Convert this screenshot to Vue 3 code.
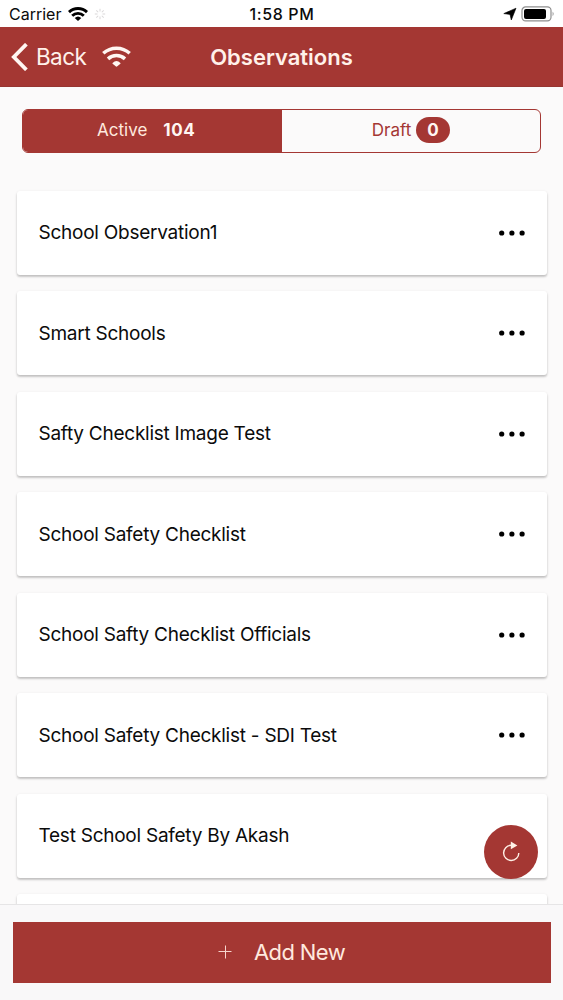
<script setup>
import { ref } from 'vue';

const activeTab = ref('active');

const observations = [
    'School Observation1',
    'Smart Schools',
    'Safty Checklist Image Test',
    'School Safety Checklist',
    'School Safty Checklist Officials',
    'School Safety Checklist - SDI Test',
    'Test School Safety By Akash',
    '',
];

const spinnerAngles = [0, 45, 90, 135, 180, 225, 270, 315];
</script>

<template>
    <div class="screen">
        <div class="status-bar">
            <div class="status-left">
                <span class="carrier">Carrier</span>
                <svg class="status-wifi" viewBox="0 0 20 14" width="20" height="14">
                    <g fill="none" stroke="#000" stroke-width="2.9">
                        <path d="M1 5.1a13 13 0 0 1 18 0" />
                        <path d="M4.2 8.7a8.4 8.4 0 0 1 11.6 0" />
                    </g>
                    <path d="M6.7 11a4.8 4.8 0 0 1 6.6 0L10 14z" />
                </svg>
                <svg class="spinner" viewBox="0 0 12 12" width="12" height="12">
                    <path
                        v-for="angle in spinnerAngles"
                        :key="angle"
                        d="M6 .8v2.7"
                        stroke="#d9d7d8"
                        stroke-width="1"
                        :transform="`rotate(${angle} 6 6)`"
                    />
                </svg>
            </div>
            <span class="clock">1:58 PM</span>
            <div class="status-right">
                <svg viewBox="0 0 14 14" width="14" height="14">
                    <path d="M13 1.2 8.3 13 7 7.4.8 6.6z" stroke="#000" stroke-width=".6" />
                </svg>
                <svg viewBox="0 0 34 16" width="34" height="16">
                    <rect x="1" y=".9" width="29" height="14" rx="3.6" fill="#fff" stroke="#8e8e8e" stroke-width="1.2" />
                    <rect x="3" y="2.9" width="22" height="10" rx="2" />
                    <path d="M31.6 5.6q2 2.3 0 4.6z" fill="#8e8e8e" />
                </svg>
            </div>
        </div>

        <header class="toolbar">
            <button class="back-button">
                <svg viewBox="0 0 17 28" width="17" height="28">
                    <path d="M15.4 1.2 2.8 14l12.6 12.8" fill="none" stroke="#fff6f2" stroke-width="3.8" />
                </svg>
                <span>Back</span>
            </button>
            <svg viewBox="0 0 29 21" width="29" height="21">
                <g fill="none" stroke="#fff6f2" stroke-width="3.5">
                    <path d="M1.3 7.3a19.6 19.6 0 0 1 26.4 0" />
                    <path d="M6 12.9a12.6 12.6 0 0 1 17 0" />
                </g>
                <path d="M10.6 16.9q3.9-3.8 7.8 0 .4.5 0 .9l-3.4 2.7q-.5.3-1 0l-3.4-2.7q-.4-.4 0-.9z" fill="#fff6f2" />
            </svg>
            <h1 class="title">Observations</h1>
        </header>

        <main class="content">
            <div class="segment">
                <button
                    class="segment-button"
                    :class="{ selected: activeTab === 'active' }"
                    @click="activeTab = 'active'"
                >
                    <span>Active</span>
                    <span class="count count-active">104</span>
                </button>
                <button
                    class="segment-button"
                    :class="{ selected: activeTab === 'draft' }"
                    @click="activeTab = 'draft'"
                >
                    <span>Draft</span>
                    <span class="count count-draft">0</span>
                </button>
            </div>

            <div class="cards">
                <article v-for="(name, index) in observations" :key="index" class="card">
                    <span class="card-name">{{ name }}</span>
                    <svg viewBox="0 0 26 6" width="26" height="6">
                        <circle cx="2.7" cy="3" r="2.6" />
                        <circle cx="12.9" cy="3" r="2.6" />
                        <circle cx="23.1" cy="3" r="2.6" />
                    </svg>
                </article>
            </div>
        </main>

        <button class="refresh">
            <svg viewBox="0 0 20 22" width="20" height="22" fill="none">
                <path d="M12.3 4.3H10a7.6 7.6 0 1 0 7.8 7.6" stroke="#fff0e6" stroke-width="1.4" />
                <path d="M9.8.6v7.6l6.6-3.7z" fill="#fff0e6" />
            </svg>
        </button>

        <footer class="footer">
            <button class="add-button">
                <svg viewBox="0 0 14 14" width="14" height="14">
                    <path d="M7.5 .5v13M.5 6.5h13" stroke="#f7d5cd" stroke-width="1" />
                </svg>
                <span>Add New</span>
            </button>
        </footer>
    </div>
</template>

<style>
body {
    background: #fbfafa;
}
</style>

<style scoped>
.screen {
    position: relative;
    display: flex;
    flex-direction: column;
    width: 563px;
    height: 1000px;
    overflow: hidden;
    background: #fbfafa;
    color: #0b0b0b;
    font-family: Inter, "Liberation Sans", sans-serif;
}

button {
    margin: 0;
    padding: 0;
    border: 0;
    background: none;
    color: inherit;
    font: inherit;
    letter-spacing: inherit;
}

svg {
    display: block;
    flex-shrink: 0;
}

.status-bar {
    display: grid;
    grid-template-columns: 1fr auto 1fr;
    align-items: center;
    flex-shrink: 0;
    height: 27px;
    padding: 1px 8px 0 9px;
    box-sizing: border-box;
    background: #fff;
    font-size: 16px;
}

.status-left {
    display: flex;
    align-items: center;
}

.status-wifi {
    margin: -1px 0 0 7px;
}

.spinner {
    margin-left: 6px;
}

.clock {
    font-weight: 500;
    letter-spacing: 0.6px;
}

.status-right {
    display: flex;
    align-items: center;
    justify-content: flex-end;
    gap: 4px;
}

.toolbar {
    display: grid;
    grid-template-columns: 91px 105px 149px 1fr;
    align-items: center;
    flex-shrink: 0;
    height: 60px;
    padding-left: 11px;
    box-sizing: border-box;
    border-bottom: 1px solid #963632;
    background: #a43733;
    color: #fff1ea;
}

.back-button {
    display: flex;
    align-items: center;
    gap: 8px;
    font-size: 22.5px;
    letter-spacing: -0.6px;
}

.title {
    margin: 0;
    font-size: 22px;
    font-weight: 600;
    text-align: center;
}

.content {
    flex: 1;
    min-height: 0;
    padding: 22px 16.5px 0;
    overflow: hidden;
}

.segment {
    display: flex;
    height: 43.5px;
    margin: 0 5.5px 38px;
    box-sizing: border-box;
    border: 1.5px solid #a43733;
    border-radius: 6px;
    overflow: hidden;
}

.segment-button {
    display: flex;
    flex: 1;
    align-items: center;
    justify-content: center;
    padding-bottom: 1px;
    color: #a43733;
    font-size: 17px;
}

.segment-button.selected {
    background: #a43733;
    color: #ffe9df;
}

.count {
    font-weight: 700;
}

.count-active {
    margin: 0 12px 0 16px;
    color: #fff6f2;
    letter-spacing: 0.6px;
}

.count-draft {
    height: 26px;
    margin-left: 5px;
    padding: 0 11px;
    border-radius: 13px;
    background: #a43733;
    color: #fff6f2;
    line-height: 26px;
}

.cards {
    display: flex;
    flex-direction: column;
    gap: 16.5px;
}

.card {
    display: flex;
    align-items: center;
    justify-content: space-between;
    flex-shrink: 0;
    height: 84px;
    padding: 0 22px;
    box-sizing: border-box;
    border-radius: 3px;
    background: #fff;
    box-shadow: 0 2px 2px rgba(0, 0, 0, 0.15), 0 1px 3px rgba(0, 0, 0, 0.13);
}

.card-name {
    font-size: 19px;
    letter-spacing: -0.25px;
}

.refresh {
    position: absolute;
    right: 25px;
    bottom: 121px;
    display: flex;
    align-items: center;
    justify-content: center;
    width: 54px;
    height: 54px;
    border-radius: 50%;
    background: #a43733;
}

.footer {
    flex-shrink: 0;
    height: 96px;
    padding: 17px 12.5px 0;
    box-sizing: border-box;
    border-top: 1.5px solid #e6e5e6;
    background: #f9f8f9;
}

.add-button {
    display: flex;
    align-items: center;
    justify-content: center;
    gap: 22px;
    width: 100%;
    height: 60.5px;
    background: #a43733;
    color: #ffe9df;
    font-size: 22px;
    letter-spacing: -0.6px;
}
</style>
